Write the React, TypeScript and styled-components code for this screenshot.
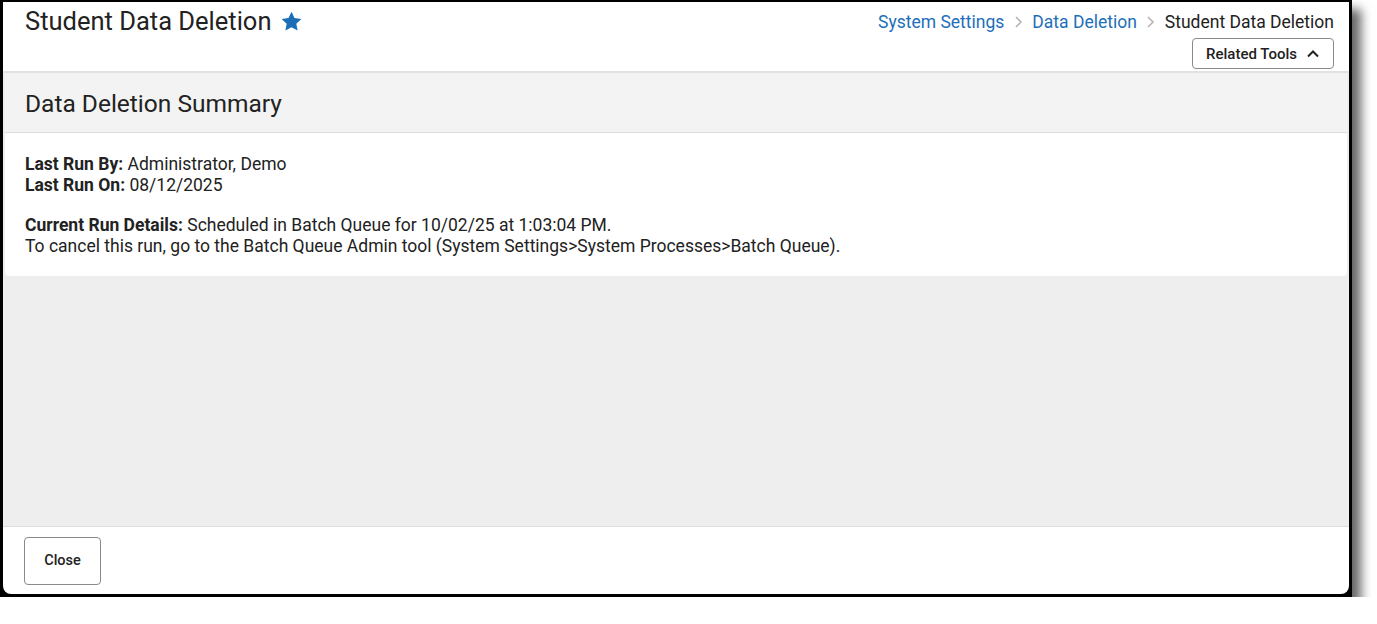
import React from 'react';
import styled, { createGlobalStyle } from 'styled-components';

const GlobalStyle = createGlobalStyle`
  html, body {
    margin: 0;
    padding: 0;
    background: #ffffff;
  }
  body {
    font-family: Roboto, 'Liberation Sans', sans-serif;
    color: #222222;
  }
`;

const Frame = styled.div`
  width: 1346px;
  padding: 2px 3px 3px 3px;
  background: #000000;
  box-shadow: 9px 9px 10px rgba(0, 0, 0, 0.6);
`;

const Window = styled.div`
  height: 592px;
  display: flex;
  flex-direction: column;
  background: #ffffff;
  border-radius: 0 0 8px 8px;
  overflow: hidden;
`;

const Header = styled.div`
  height: 69px;
  flex-shrink: 0;
  display: flex;
  justify-content: space-between;
  padding: 0 15px 0 22px;
  border-bottom: 2px solid #e2e2e2;
`;

const TitleRow = styled.div`
  display: flex;
  align-items: center;
  gap: 9px;
  height: 38px;
`;

const Title = styled.h1`
  margin: 0;
  font-size: 25.5px;
  font-weight: 400;
  color: #222222;
`;

const HeaderRight = styled.div`
  display: flex;
  flex-direction: column;
  align-items: flex-end;
`;

const Breadcrumbs = styled.nav`
  display: flex;
  align-items: center;
  gap: 9.5px;
  height: 38px;
  margin-top: 1px;
  font-size: 17.5px;
`;

const Crumb = styled.span<{ $current?: boolean }>`
  color: ${(p) => (p.$current ? '#222222' : '#1d6fb8')};
`;

const ToolsButton = styled.button`
  display: flex;
  align-items: center;
  gap: 9px;
  height: 31px;
  margin-top: -3px;
  padding: 0 13px;
  background: #ffffff;
  border: 1px solid #8a8a8a;
  border-radius: 4px;
  font-family: Roboto, 'Liberation Sans', sans-serif;
  font-size: 15px;
  font-weight: 500;
  color: #222222;
`;

const Main = styled.main`
  flex: 1;
  background: #eeeeee;
  padding: 0 2px;
`;

const Card = styled.section`
  background: #ffffff;
  border-radius: 4px;
  overflow: hidden;
`;

const CardHeader = styled.div`
  height: 58px;
  display: flex;
  align-items: center;
  padding: 1px 20px 0;
  background: #f3f3f3;
  border-bottom: 1px solid #dddddd;
`;

const CardTitle = styled.h2`
  margin: 0;
  font-size: 24.5px;
  font-weight: 400;
  color: #222222;
`;

const CardBody = styled.div`
  padding: 21px 20px 19px;
  font-size: 17.5px;
  line-height: 21px;
`;

const Paragraph = styled.p`
  margin: 0 0 19px;
  &:last-child {
    margin-bottom: 0;
  }
`;

const Label = styled.b`
  font-weight: 700;
`;

const Footer = styled.footer`
  height: 67px;
  flex-shrink: 0;
  display: flex;
  align-items: center;
  padding: 0 21px;
  border-top: 1px solid #dddddd;
`;

const CloseButton = styled.button`
  width: 77px;
  height: 48px;
  background: #ffffff;
  border: 1px solid #8a8a8a;
  border-radius: 4px;
  font-family: Roboto, 'Liberation Sans', sans-serif;
  font-size: 14.5px;
  font-weight: 500;
  color: #222222;
`;

const Star = () => (
  <svg width="23" height="23" viewBox="0 0 24 24">
    <path
      fill="#1b6db5"
      d="M12 1.8l3.1 6.6 7.2.9-5.3 5 1.4 7.1L12 17.9l-6.4 3.5 1.4-7.1-5.3-5 7.2-.9z"
    />
  </svg>
);

const Chevron = () => (
  <svg width="9" height="14" viewBox="0 0 9 14">
    <path d="M2 2l5 5-5 5" fill="none" stroke="#b5b5b5" strokeWidth="1.6" />
  </svg>
);

const ChevronUp = () => (
  <svg width="14" height="9" viewBox="0 0 14 9">
    <path d="M2 7.5l5-5 5 5" fill="none" stroke="#222222" strokeWidth="2" />
  </svg>
);

const App = () => {
  return (
    <>
      <GlobalStyle />
      <Frame>
        <Window>
          <Header>
            <TitleRow>
              <Title>Student Data Deletion</Title>
              <Star />
            </TitleRow>
            <HeaderRight>
              <Breadcrumbs>
                <Crumb>System Settings</Crumb>
                <Chevron />
                <Crumb>Data Deletion</Crumb>
                <Chevron />
                <Crumb $current>Student Data Deletion</Crumb>
              </Breadcrumbs>
              <ToolsButton type="button">
                Related Tools
                <ChevronUp />
              </ToolsButton>
            </HeaderRight>
          </Header>
          <Main>
            <Card>
              <CardHeader>
                <CardTitle>Data Deletion Summary</CardTitle>
              </CardHeader>
              <CardBody>
                <Paragraph>
                  <Label>Last Run By:</Label> Administrator, Demo
                  <br />
                  <Label>Last Run On:</Label> 08/12/2025
                </Paragraph>
                <Paragraph>
                  <Label>Current Run Details:</Label> Scheduled in Batch Queue for
                  10/02/25 at 1:03:04 PM.
                  <br />
                  To cancel this run, go to the Batch Queue Admin tool (System
                  Settings&gt;System Processes&gt;Batch Queue).
                </Paragraph>
              </CardBody>
            </Card>
          </Main>
          <Footer>
            <CloseButton type="button">Close</CloseButton>
          </Footer>
        </Window>
      </Frame>
    </>
  );
};

export default App;
